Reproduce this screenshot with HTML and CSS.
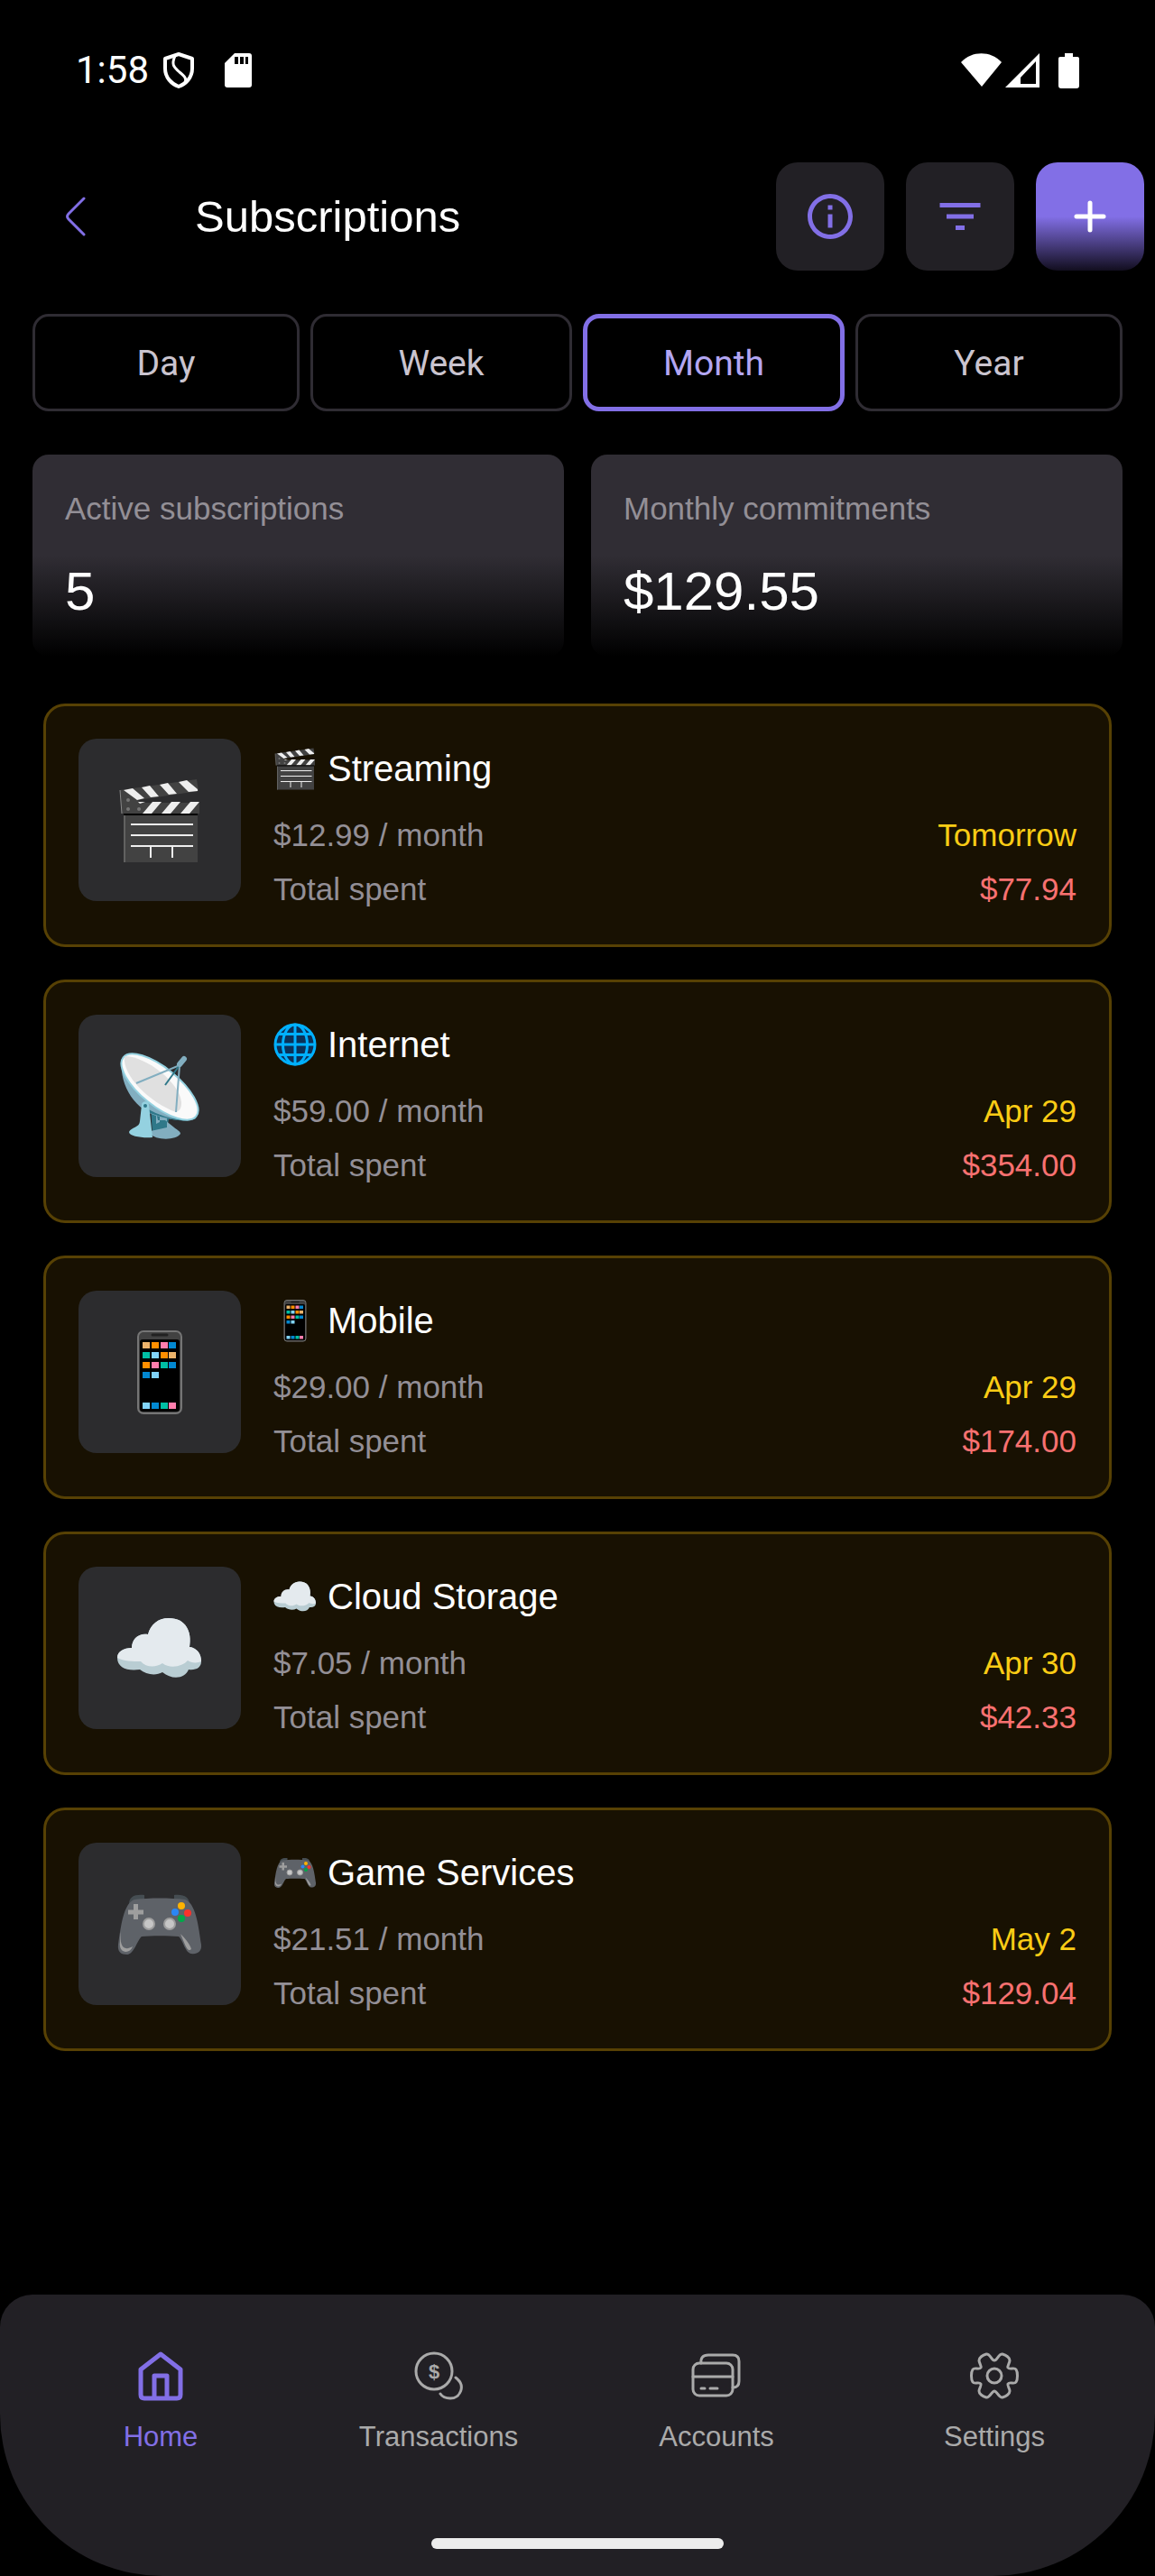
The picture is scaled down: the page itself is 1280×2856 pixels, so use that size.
FILE: index.html
```html
<!DOCTYPE html>
<html lang="en">
<head>
    <meta charset="UTF-8">
    <meta name="viewport" content="width=device-width, initial-scale=1.0">
    <title>Subscriptions</title>
    <link rel="stylesheet" href="styles.css">
</head>
<body>
    <!-- Emoji shared by the thumbnails and the names -->
    <svg class="sprite" aria-hidden="true">
        <symbol id="clapper" viewBox="0 0 96 96">
            <path d="M4 15L89 3L91 16L24 26L26 29H92V41H6Z" fill="#424242"/>
            <path d="M4 15L6 41" stroke="#8a8a8a" stroke-width="1"/>
            <path d="M8 15L18 13L31 24L23 26ZM28 12L37 10L47 22L38 23ZM48 9L57 7L67 19L58 20ZM69 6L78 4L90 14V16L80 17Z" fill="#eee"/>
            <path d="M24 28H32L26 30ZM40 28H50L39 41H29ZM61 28H71L60 41H50ZM82 28H92L81 41H71Z" fill="#eee"/>
            <g fill="#757575"><circle cx="13" cy="26" r="2"/><circle cx="13" cy="36" r="2"/><circle cx="25" cy="36" r="2"/></g>
            <path d="M8 41H90V95H8Z" fill="#424242"/>
            <path d="M9 42V95" stroke="#616161" stroke-width="2"/>
            <path d="M8 42H90" stroke="#000" stroke-width="2"/>
            <path d="M16 53H85M16 65H85M16 77H85M38 77V90M62 77V90" stroke="#eee" stroke-width="2"/>
        </symbol>
        <symbol id="dish" viewBox="0 0 96 96">
            <path d="M38 60L59 67L56 86L40 90Z" fill="#2f7889"/>
            <path d="M46 75H54L64 83C66 85 71 87 71 90C66 98 42 97 38 90L38 87L56 83V72L48 70V77L44 79V66Z" fill="#82aec0"/>
            <path d="M6 10C3 36 22 66 48 71C62 75 78 77 88 73Z" fill="#82aec0"/>
            <path d="M34 62C50 72 76 78 90 72C78 80 54 73 34 66Z" fill="#2f7889"/>
            <path d="M28 58C28 53 36 53 36 58L40 94C30 95 14 93 14 88C16 83 26 83 26 76Z" fill="#94d1e0"/>
            <circle cx="32" cy="59" r="2" fill="#2f7889"/>
            <ellipse cx="48" cy="38" rx="52" ry="21" transform="rotate(39 48 38)" fill="#fafafa" stroke="#94d1e0" stroke-width="2"/>
            <path d="M9 4C33 4 70 33 72 55C72 61 71 64 66 66C38 56 6 26 9 4Z" fill="#e0e0e0"/>
            <path d="M22 34L70 14L66 66" fill="none" stroke="#82aec0" stroke-width="2"/>
            <path d="M54 36L70 14" stroke="#2f7889" stroke-width="2"/>
            <path d="M70 13L75 7" stroke="#82aec0" stroke-width="6" stroke-linecap="round"/>
        </symbol>
        <symbol id="globe" viewBox="0 0 96 96">
            <circle cx="48" cy="48" r="46" fill="#0b3158"/>
            <g fill="none" stroke="#00b0ff" stroke-width="6">
                <circle cx="48" cy="48" r="44"/>
                <ellipse cx="48" cy="48" rx="27" ry="44"/>
                <path d="M48 4V92M4 48H92M12 25H84M12 71H84"/>
            </g>
        </symbol>
        <symbol id="phone" viewBox="0 0 96 96">
            <rect x="24" y="3" width="48" height="91" rx="6" fill="#424242" stroke="#757575" stroke-width="2"/>
            <rect x="26" y="12" width="44" height="80" rx="3"/>
            <path d="M40 7H56" stroke="#212121" stroke-width="3" stroke-linecap="round"/>
            <path d="M29 15h8v7h-8zM58 26h8v7h-8z" fill="#ecb36b"/>
            <path d="M39 15h8v7h-8zM49 26h8v7h-8zM29 37h8v7h-8z" fill="#ff8f00"/>
            <path d="M49 15h8v7h-8zM39 37h8v7h-8zM58 82h8v7h-8z" fill="#ff7eae"/>
            <path d="M58 15h8v7h-8zM58 37h8v7h-8zM29 48h8v7h-8zM39 82h8v7h-8z" fill="#0288d1"/>
            <path d="M29 26h8v7h-8zM49 37h8v7h-8zM49 82h8v7h-8z" fill="#00bfa5"/>
            <path d="M39 26h8v7h-8zM39 48h8v7h-8zM29 82h8v7h-8z" fill="#81d4fa"/>
        </symbol>
        <symbol id="cloud" viewBox="0 0 96 96">
            <path d="M1 59C1 52 8 48 17 48C17 38 25 31 35 33C38 22 46 15 58 15C77 15 84 30 81 47C89 48 94 54 94 63C94 70 88 73 80 72C76 82 62 84 51 75C44 79 33 78 26 72C12 74 1 70 1 59Z" fill="#b9cdd3"/>
            <path d="M1 59C1 52 8 48 17 48C17 38 25 31 35 33C38 22 46 15 58 15C77 15 84 30 81 47C89 48 94 54 94 63C90 65 83 65 79 62C74 68 60 72 51 65C44 70 33 70 27 63C18 63 8 63 1 59Z" fill="#e4eaee"/>
        </symbol>
        <symbol id="gamepad" viewBox="0 0 96 96">
            <path d="M14 26C14 18 20 15 31 16V24ZM64 16C75 15 81 18 81 27L64 24Z" fill="#454d52"/>
            <path d="M20 21C36 19 60 19 76 21C88 25 91 50 94 71C95 79 89 82 83 81C76 80 74 66 69 62C58 61 38 61 28 62C23 66 20 81 12 82C5 82 1 79 2 71C5 50 8 25 20 21Z" fill="#5e6268"/>
            <path d="M21.500 26V43M13 35H30" stroke="#9e9e9e" stroke-width="5"/>
            <path d="M5 57C3 72 8 79 18 73C15 82 2 81 4 68C4 63 4 60 5 57ZM71 59C76 64 82 71 83 76C80 79 78 75 76 71Z" fill="#9e9e9e"/>
            <g fill="#c6c6c6" stroke="#9e9e9e" stroke-width="2"><circle cx="36" cy="48" r="6"/><circle cx="59" cy="48" r="6"/></g>
            <circle cx="72" cy="28" r="4" fill="#ffb300"/>
            <circle cx="65" cy="35" r="4" fill="#2a87f5"/>
            <circle cx="79" cy="36" r="4" fill="#f9322c"/>
            <circle cx="72" cy="42" r="4" fill="#00a84a"/>
        </symbol>
    </svg>

    <div class="status-bar">
        <span class="time">1:58</span>
        <svg class="shield" width="34" height="40" viewBox="0 0 34 40" fill="none" stroke="#fff" stroke-width="4" stroke-linejoin="round">
            <path d="M17 2L32 7V18C32 28 25 35 17 38C9 35 2 28 2 18V7Z"/>
            <path d="M13 4C8 15 13 17 18 22C24 27 26 29 24 34" stroke-width="3"/>
        </svg>
        <svg class="sd-card" width="30" height="38" viewBox="0 0 30 38">
            <path d="M11 0H27Q30 0 30 3V35Q30 38 27 38H3Q0 38 0 35V11Z" fill="#fff"/>
            <path d="M11 4h4v8h-4zM17 4h4v8h-4zM23 4h3v8h-3z"/>
        </svg>
        <div class="status-right">
            <svg width="45" height="38" viewBox="0 0 45 38"><path d="M0 10C12 -3 33 -3 45 10L23 37Z" fill="#fff"/></svg>
            <svg width="38" height="38" viewBox="0 0 38 38"><path d="M38 0V38H0ZM34 9L17 27V34H34Z" fill="#fff" fill-rule="evenodd"/></svg>
            <svg class="battery" width="23" height="39" viewBox="0 0 23 39"><path d="M7 0H16V4H21Q23 4 23 6V36Q23 39 20 39H3Q0 39 0 36V6Q0 4 2 4H7Z" fill="#fff"/></svg>
        </div>
    </div>

    <header>
        <button class="back-btn" aria-label="Back">
            <svg width="24" height="44" viewBox="0 0 24 44" fill="none" stroke="#826fe6" stroke-width="3" stroke-linecap="round">
                <path d="M21 2L4 19Q1 22 4 25L21 42"/>
            </svg>
        </button>
        <h1>Subscriptions</h1>
        <div class="actions">
            <button class="icon-btn" aria-label="Info">
                <svg width="60" height="60" viewBox="0 0 24 24" fill="#826fe6">
                    <path d="M11 7h2v2h-2zm0 4h2v6h-2zm1-9C6.480 2 2 6.480 2 12s4.480 10 10 10 10-4.480 10-10S17.520 2 12 2zm0 18c-4.410 0-8-3.590-8-8s3.590-8 8-8 8 3.590 8 8-3.590 8-8 8z"/>
                </svg>
            </button>
            <button class="icon-btn" aria-label="Filter">
                <svg width="60" height="60" viewBox="0 0 24 24" fill="#826fe6">
                    <path d="M10 18h4v-2h-4v2zM3 6v2h18V6H3zm3 7h12v-2H6v2z"/>
                </svg>
            </button>
            <button class="icon-btn add-btn" aria-label="Add subscription">
                <svg width="60" height="60" viewBox="0 0 60 60" stroke="#fff" stroke-width="5" stroke-linecap="round">
                    <path d="M30 15V45M15 30H45"/>
                </svg>
            </button>
        </div>
    </header>

    <main>
        <div class="tabs">
            <button class="tab">Day</button>
            <button class="tab">Week</button>
            <button class="tab active">Month</button>
            <button class="tab">Year</button>
        </div>

        <div class="summary">
            <div class="summary-card">
                <p class="label">Active subscriptions</p>
                <p class="value">5</p>
            </div>
            <div class="summary-card">
                <p class="label">Monthly commitments</p>
                <p class="value">$129.55</p>
            </div>
        </div>

        <ul class="subscriptions">
            <li class="subscription">
                <div class="thumb"><svg><use href="#clapper"/></svg></div>
                <div class="details">
                    <h2><svg><use href="#clapper"/></svg>Streaming</h2>
                    <p class="row"><span>$12.99 / month</span><span class="due">Tomorrow</span></p>
                    <p class="row"><span>Total spent</span><span class="spent">$77.94</span></p>
                </div>
            </li>
            <li class="subscription">
                <div class="thumb"><svg><use href="#dish"/></svg></div>
                <div class="details">
                    <h2><svg><use href="#globe"/></svg>Internet</h2>
                    <p class="row"><span>$59.00 / month</span><span class="due">Apr 29</span></p>
                    <p class="row"><span>Total spent</span><span class="spent">$354.00</span></p>
                </div>
            </li>
            <li class="subscription">
                <div class="thumb"><svg><use href="#phone"/></svg></div>
                <div class="details">
                    <h2><svg><use href="#phone"/></svg>Mobile</h2>
                    <p class="row"><span>$29.00 / month</span><span class="due">Apr 29</span></p>
                    <p class="row"><span>Total spent</span><span class="spent">$174.00</span></p>
                </div>
            </li>
            <li class="subscription">
                <div class="thumb"><svg><use href="#cloud"/></svg></div>
                <div class="details">
                    <h2><svg><use href="#cloud"/></svg>Cloud Storage</h2>
                    <p class="row"><span>$7.05 / month</span><span class="due">Apr 30</span></p>
                    <p class="row"><span>Total spent</span><span class="spent">$42.33</span></p>
                </div>
            </li>
            <li class="subscription">
                <div class="thumb"><svg><use href="#gamepad"/></svg></div>
                <div class="details">
                    <h2><svg><use href="#gamepad"/></svg>Game Services</h2>
                    <p class="row"><span>$21.51 / month</span><span class="due">May 2</span></p>
                    <p class="row"><span>Total spent</span><span class="spent">$129.04</span></p>
                </div>
            </li>
        </ul>
    </main>

    <footer>
        <nav>
            <a href="#" class="active">
                <svg viewBox="0 0 60 60" stroke-width="5">
                    <path d="M30 6L8 23V51Q8 55 12 55H48Q52 55 52 51V23ZM23 55V30H37V55"/>
                </svg>
                Home
            </a>
            <a href="#">
                <svg viewBox="0 0 60 60" stroke-width="3">
                    <circle cx="25" cy="25" r="20"/>
                    <path d="M49 32C61 41 54 55 43 55C38 55 34 53 32 50"/>
                    <text x="25" y="33" text-anchor="middle">$</text>
                </svg>
                Transactions
            </a>
            <a href="#">
                <svg viewBox="0 0 60 60" stroke-width="3">
                    <rect x="4" y="16" width="44" height="36" rx="7"/>
                    <path d="M4 31H48M13 44H17M23 44H31M13 16Q12 7 21 7H48Q55 7 55 14V36Q55 43 48 43"/>
                </svg>
                Accounts
            </a>
            <a href="#">
                <svg viewBox="0 0 60 60" stroke-width="3">
                    <path d="M30 13C33 13 35 5 39 6C43 7 47 10 47 13C47 16 44 19 45 21C47 24 52 20 54 23C56 26 56 34 54 37C52 40 47 36 45 39C44 41 47 44 47 47C47 50 43 53 39 54C35 55 33 47 30 47C27 47 25 55 21 54C17 53 13 50 13 47C13 44 16 41 15 39C13 36 8 40 6 37C4 34 4 26 6 23C8 20 13 24 15 21C16 19 13 16 13 13C13 10 17 7 21 6C25 5 27 13 30 13Z"/>
                    <circle cx="30" cy="30" r="8"/>
                </svg>
                Settings
            </a>
        </nav>
        <div class="home-indicator"></div>
    </footer>
</body>
</html>
```
FILE: styles.css
```css
* {
    margin: 0;
    padding: 0;
    box-sizing: border-box;
}

body {
    min-height: 100vh;
    display: flex;
    flex-direction: column;
    background: #000;
    color: #fff;
    font-family: "Liberation Sans", Arial, sans-serif;
}

button {
    border: none;
    background: none;
    cursor: pointer;
    font-family: inherit;
}

svg {
    display: block;
    flex-shrink: 0;
}

.sprite {
    position: absolute;
    width: 0;
    height: 0;
}

/* Status bar */
.status-bar {
    display: flex;
    align-items: center;
    height: 40px;
    margin: 58px 84px 82px;
}

.time {
    font-family: Roboto, sans-serif;
    font-size: 42px;
    line-height: 40px;
}

.shield {
    margin-left: 16px;
}

.sd-card {
    margin-left: 34px;
}

.status-right {
    display: flex;
    align-items: center;
    gap: 4px;
    margin-left: auto;
}

.battery {
    margin-left: 17px;
}

/* Header */
header {
    display: flex;
    align-items: center;
    padding: 0 12px 0 36px;
}

.back-btn {
    display: flex;
    align-items: center;
    justify-content: center;
    width: 96px;
    height: 96px;
}

h1 {
    margin-left: 84px;
    font-size: 49px;
    font-weight: 400;
}

.actions {
    display: flex;
    gap: 24px;
    margin-left: auto;
}

.icon-btn {
    display: flex;
    align-items: center;
    justify-content: center;
    width: 120px;
    height: 120px;
    border-radius: 24px;
    background: #222025;
}

.add-btn {
    background: linear-gradient(#826fe6 50%, #120e1f);
}

/* Period tabs */
main {
    padding: 48px 36px;
}

.tabs {
    display: grid;
    grid-template-columns: repeat(4, 1fr);
}

.tab {
    height: 108px;
    margin: 0 6px;
    padding-top: 2px;
    border: 3px solid #2f2c33;
    border-radius: 18px;
    color: #cac4cf;
    font-family: Roboto, sans-serif;
    font-size: 39px;
}

.tab:first-child {
    margin-left: 0;
}

.tab:last-child {
    margin-right: 0;
}

.tab.active {
    border: 5px solid #826fe6;
    color: #b3a6f2;
}

/* Summary */
.summary {
    display: flex;
    gap: 30px;
    margin-top: 48px;
}

.summary-card {
    flex: 1;
    padding: 36px;
    border-radius: 18px;
    background: linear-gradient(#302d34 50%, #000);
}

.label {
    color: #938f96;
    font-size: 35px;
    line-height: 48px;
}

.value {
    margin-top: 32px;
    font-size: 60px;
    line-height: 72px;
}

/* Subscription list */
.subscriptions {
    display: flex;
    flex-direction: column;
    gap: 36px;
    margin: 52px 12px 0;
    list-style: none;
}

.subscription {
    display: flex;
    gap: 36px;
    padding: 36px;
    border: 3px solid #574104;
    border-radius: 24px;
    background: #181102;
}

.thumb {
    display: flex;
    align-items: center;
    justify-content: center;
    flex-shrink: 0;
    width: 180px;
    height: 180px;
    border-radius: 20px;
    background: #2c2c2e;
}

.thumb svg {
    width: 96px;
    height: 96px;
}

.details {
    flex: 1;
}

h2 {
    display: flex;
    align-items: center;
    gap: 12px;
    margin-bottom: 16px;
    font-size: 40px;
    font-weight: 400;
    line-height: 66px;
}

h2 svg {
    width: 48px;
    height: 48px;
}

.row {
    display: flex;
    justify-content: space-between;
    color: #938f96;
    font-size: 35px;
    line-height: 50px;
}

.row + .row {
    margin-top: 10px;
}

.due {
    color: #facc15;
}

.spent {
    color: #f87171;
}

/* Bottom navigation */
footer {
    margin-top: auto;
    padding: 60px 24px 30px;
    border-radius: 36px 36px 180px 180px;
    background: #222025;
}

nav {
    display: flex;
}

nav a {
    flex: 1;
    display: flex;
    flex-direction: column;
    align-items: center;
    gap: 20px;
    color: #aaa;
    font-size: 31px;
    line-height: 36px;
    text-decoration: none;
}

nav a.active {
    color: #826fe6;
}

nav svg {
    width: 60px;
    height: 60px;
    fill: none;
    stroke: currentColor;
    stroke-linecap: round;
    stroke-linejoin: round;
}

nav text {
    fill: currentColor;
    stroke: none;
    font-size: 22px;
    font-weight: 700;
}

.home-indicator {
    width: 324px;
    height: 12px;
    margin: 94px auto 0;
    border-radius: 6px;
    background: #ececec;
}
```
